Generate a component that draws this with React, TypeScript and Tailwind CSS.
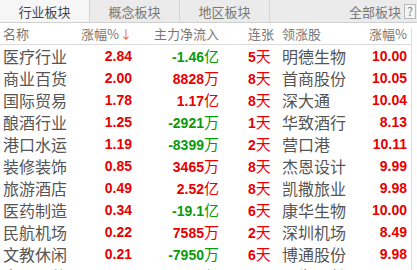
import React from "react";

const ROWS = [
  { name: "医疗行业", chg: "2.84", flow: "-1.46", unit: "亿", days: "5", leader: "明德生物", lchg: "10.00" },
  { name: "商业百货", chg: "2.00", flow: "8828", unit: "万", days: "8", leader: "首商股份", lchg: "10.05" },
  { name: "国际贸易", chg: "1.78", flow: "1.17", unit: "亿", days: "8", leader: "深大通", lchg: "10.04" },
  { name: "酿酒行业", chg: "1.25", flow: "-2921", unit: "万", days: "1", leader: "华致酒行", lchg: "8.13" },
  { name: "港口水运", chg: "1.19", flow: "-8399", unit: "万", days: "2", leader: "营口港", lchg: "10.11" },
  { name: "装修装饰", chg: "0.85", flow: "3465", unit: "万", days: "8", leader: "杰恩设计", lchg: "9.99" },
  { name: "旅游酒店", chg: "0.49", flow: "2.52", unit: "亿", days: "8", leader: "凯撒旅业", lchg: "9.98" },
  { name: "医药制造", chg: "0.34", flow: "-19.1", unit: "亿", days: "6", leader: "康华生物", lchg: "10.00" },
  { name: "民航机场", chg: "0.22", flow: "7585", unit: "万", days: "2", leader: "深圳机场", lchg: "8.49" },
  { name: "文教休闲", chg: "0.21", flow: "-7950", unit: "万", days: "6", leader: "博通股份", lchg: "9.98" },
  { name: "电子元件", chg: "0.18", flow: "-1.05", unit: "亿", days: "3", leader: "同为股份", lchg: "10.01" },
];

const TABS = ["行业板块", "概念板块", "地区板块"];

export default function App() {
  return (
    <div className="w-[417px] h-[270px] overflow-hidden bg-white text-[#555] font-['Noto_Sans_CJK_SC',sans-serif] leading-none">
      {/* tab bar */}
      <div className="flex h-[23px] bg-[#ebebeb] border-b border-[#cfcfcf] text-[13px] text-[#777]">
        {TABS.map((t, i) => (
          <div
            key={t}
            className={`w-[90px] flex items-center justify-center border-r border-[#d4d4d4] ${i === 0 ? "bg-[#f6f6f6] text-[#444]" : ""}`}
          >
            {t}
          </div>
        ))}
        <div className="flex-1" />
        <div className="flex items-center pr-[3px]">全部板块</div>
        <div className="flex items-center pr-[1px]">
          <span className="w-[12px] h-[15px] border border-[#b8b8b8] bg-[#f4f4f4] flex items-center justify-center text-[12px] text-[#888]">?</span>
        </div>
      </div>

      <div className="flex">
        <div className="w-[411px]">
          {/* header */}
          <div className="flex items-center h-[22px] border-b border-[#dcdcdc] text-[13px] text-[#777] whitespace-nowrap">
            <div className="w-[84px] pl-[3px]">名称</div>
            <div className="w-[48px] flex justify-end items-center">
              涨幅%<span className="text-[#f06010] text-[12px] ml-[1px]">↓</span>
            </div>
            <div className="w-[87px] text-right">主力净流入</div>
            <div className="w-[63px] pl-[29px]">连张</div>
            <div className="w-[80px]">领涨股</div>
            <div className="w-[45px] text-right">涨幅%</div>
          </div>

          {/* rows */}
          {ROWS.map((r) => {
            const neg = r.flow.startsWith("-");
            const flowColor = neg ? "text-[#0a9a0a]" : "text-[#e60000]";
            return (
              <div key={r.name} className="flex items-center h-[22px] text-[16px] whitespace-nowrap">
                <div className="w-[84px] pl-[3px] text-[#555]">{r.name}</div>
                <div className="w-[48px] text-right text-[#e60000] text-[14px] font-bold font-['Liberation_Sans',sans-serif]">
                  {r.chg}
                </div>
                <div className={`w-[87px] ${flowColor} flex justify-end items-baseline`}>
                  <span className="text-[14px] font-bold font-['Liberation_Sans',sans-serif]">{r.flow}</span>
                  <span className="text-[15px]">{r.unit}</span>
                </div>
                <div className="w-[63px] pl-[29px] text-[#e60000] flex items-baseline">
                  <span className="text-[14px] font-bold font-['Liberation_Sans',sans-serif]">{r.days}</span>
                  <span className="text-[15px]">天</span>
                </div>
                <div className="w-[80px] text-[#555]">{r.leader}</div>
                <div className="w-[45px] text-right text-[#e60000] text-[14px] font-bold font-['Liberation_Sans',sans-serif]">
                  {r.lchg}
                </div>
              </div>
            );
          })}
        </div>
        <div className="flex-1 border-l border-[#e0e0e0] mt-[5px]" />
      </div>
    </div>
  );
}
